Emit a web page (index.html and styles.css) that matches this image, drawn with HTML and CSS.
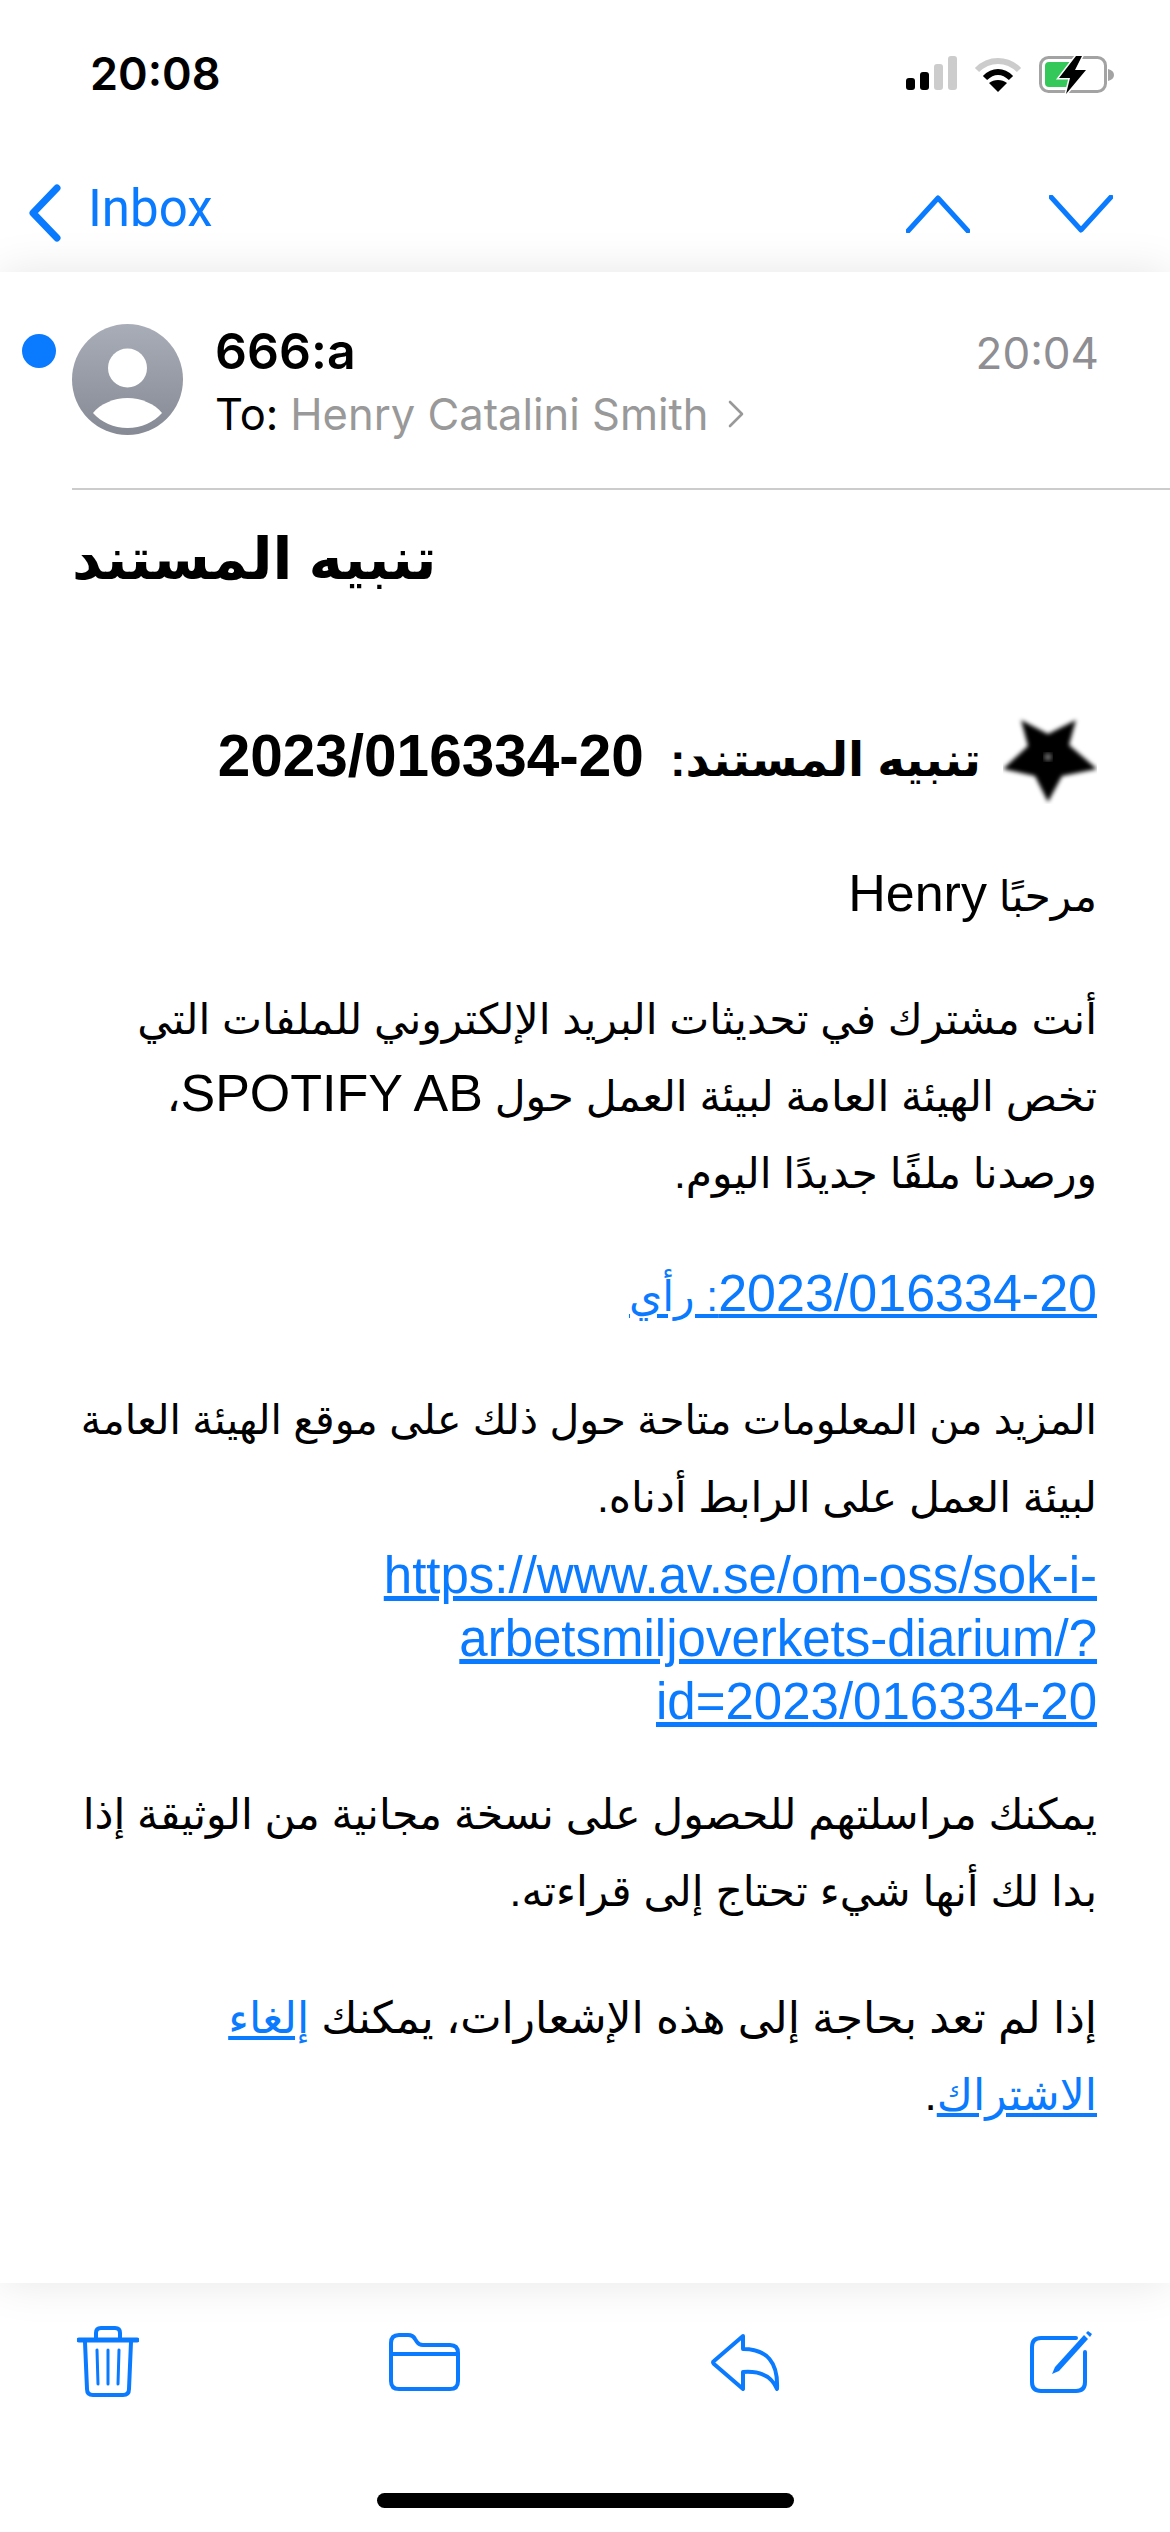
FILE: index.html
```html
<!DOCTYPE html>
<html lang="en">

<head>
  <meta charset="UTF-8">
  <title>Mail</title>
  <link rel="stylesheet" href="styles.css">
</head>

<body>
  <div class="phone">
    <header class="status-bar">
      <span class="clock">20:08</span>
      <div class="status-icons">
        <svg class="signal" width="51" height="34" viewBox="0 0 51 34">
          <rect x="0" y="22" width="9" height="12" rx="3" fill="#000" />
          <rect x="14" y="16" width="9" height="18" rx="3" fill="#000" />
          <rect x="28" y="8" width="9" height="26" rx="3" fill="#ccc" />
          <rect x="42" y="0" width="9" height="34" rx="3" fill="#ccc" />
        </svg>
        <svg class="wifi" width="48" height="36" viewBox="0 0 48 36">
          <path d="M3 14 C15 2 33 2 45 14" fill="none" stroke="#ccc" stroke-width="6" />
          <path d="M11 22 C19 14 29 14 37 22" fill="none" stroke="#000" stroke-width="6" />
          <path d="M24 36 L15 27 C20 23 28 23 33 27 Z" fill="#000" />
        </svg>
        <svg class="battery" width="76" height="38" viewBox="0 0 76 38">
          <rect x="1.5" y="1.5" width="65" height="34" rx="8" fill="none" stroke="#a3a3a3" stroke-width="3" />
          <rect x="6" y="6" width="30" height="25" rx="4" fill="#34c759" />
          <path d="M69 13 C73 14 75 16 75 19 C75 22 73 24 69 25 Z" fill="#a3a3a3" />
          <path d="M37 0 L20 22 L31 22 L27 38 L47 14 L36 14 L43 0 Z" fill="#000" stroke="#fff" stroke-width="3" paint-order="stroke" />
        </svg>
      </div>
    </header>

    <nav class="nav-bar">
      <a class="back">
        <svg width="33" height="58" viewBox="0 0 33 58">
          <path d="M29 4 L5 29 L29 54" fill="none" stroke="#0a7aff" stroke-width="7" stroke-linecap="round" stroke-linejoin="round" />
        </svg>
        <span>Inbox</span>
      </a>
      <div class="nav-arrows">
        <svg width="64" height="38" viewBox="0 0 64 38">
          <path d="M2 36 L32 3 L62 36" fill="none" stroke="#0a7aff" stroke-width="5" stroke-linecap="round" stroke-linejoin="round" />
        </svg>
        <svg width="64" height="38" viewBox="0 0 64 38">
          <path d="M2 2 L32 35 L62 2" fill="none" stroke="#0a7aff" stroke-width="5" stroke-linecap="round" stroke-linejoin="round" />
        </svg>
      </div>
    </nav>

    <main class="sheet">
      <section class="msg-head">
        <span class="unread-dot"></span>
        <svg class="avatar" width="111" height="111" viewBox="0 0 111 111">
          <defs>
            <linearGradient id="avatarFill" x1="0" y1="0" x2="0" y2="1">
              <stop offset="0" stop-color="#a9adb8" />
              <stop offset="1" stop-color="#868a95" />
            </linearGradient>
          </defs>
          <circle cx="55.5" cy="55.5" r="55.5" fill="url(#avatarFill)" />
          <circle cx="55.5" cy="44" r="19.5" fill="#fff" />
          <path d="M21 89 C28 80 42 74 55.5 74 C69 74 83 80 90 89 C82 98 69 104 55.5 104 C42 104 29 98 21 89 Z" fill="#fff" />
        </svg>
        <div class="msg-meta">
          <div class="sender-row">
            <span class="sender">666:a</span>
            <span class="msg-time">20:04</span>
          </div>
          <div class="recipient">
            To: <span class="recipient-name">Henry Catalini Smith</span>
            <svg width="18" height="30" viewBox="0 0 18 30">
              <path d="M3 3 L15 15 L3 27" fill="none" stroke="#999" stroke-width="2.6" stroke-linecap="round" stroke-linejoin="round" />
            </svg>
          </div>
        </div>
      </section>

      <h1 class="subject" dir="rtl">تنبيه المستند</h1>

      <article class="msg-body" dir="rtl">
        <h2 class="doc-title">
          <svg class="star" width="94" height="88" viewBox="0 0 94 88">
            <defs>
              <filter id="soft">
                <feGaussianBlur stdDeviation="2.2" />
              </filter>
            </defs>
            <path d="M18 4 L45 18 L73 4 L66 29 L94 53 L59 60 L45 86 L32 60 L0 53 L25 30 Z" fill="#000" filter="url(#soft)" />
            <circle cx="45" cy="41" r="4" fill="#666" filter="url(#soft)" />
          </svg>
          <span>تنبيه المستند:&nbsp; <bdi class="doc-number" dir="ltr">2023/016334-20</bdi></span>
        </h2>
        <p class="greeting">مرحبًا <span class="latin">Henry</span></p>
        <p class="intro">أنت مشترك في تحديثات البريد الإلكتروني للملفات التي<br>تخص الهيئة العامة لبيئة العمل حول <span class="latin">SPOTIFY AB</span>،<br>ورصدنا ملفًا جديدًا اليوم.</p>
        <p><a href="#"><span class="latin">2023/016334-20</span>: رأي</a></p>
        <p class="more-info"><span class="tight">المزيد من المعلومات متاحة حول ذلك على موقع الهيئة العامة</span><br>لبيئة العمل على الرابط أدناه.
          <a class="long-url" href="#" dir="ltr">https://www.av.se/om-oss/sok-i-<br>arbetsmiljoverkets-diarium/?<br>id=2023/016334-20</a>
        </p>
        <p class="copy-note">يمكنك مراسلتهم للحصول على نسخة مجانية من الوثيقة إذا<br>بدا لك أنها شيء تحتاج إلى قراءته.</p>
        <p class="wide">إذا لم تعد بحاجة إلى هذه الإشعارات، يمكنك <a href="#">إلغاء<br>الاشتراك</a>.</p>
      </article>
    </main>

    <footer class="toolbar">
      <div class="tool-row">
        <svg width="62" height="71" viewBox="0 0 62 71">
          <g fill="none" stroke="#0a7aff" stroke-linecap="round" stroke-linejoin="round">
            <path d="M2 14 H60" stroke-width="5" />
            <path d="M19 13 V7 Q19 2 24 2 H38 Q43 2 43 7 V13" stroke-width="4" />
            <path d="M8 16 L10 63 Q10 69 16 69 H46 Q52 69 52 63 L54 16" stroke-width="4" />
            <path d="M20 24 L21 58 M31 24 V58 M42 24 L41 58" stroke-width="3" />
          </g>
        </svg>
        <svg width="71" height="58" viewBox="0 0 71 58">
          <g fill="none" stroke="#0a7aff" stroke-width="4" stroke-linejoin="round">
            <path d="M2 10 Q2 2 10 2 H19 Q24 2 26 6 L28 9 Q30 12 34 12 H61 Q69 12 69 20 V48 Q69 56 61 56 H10 Q2 56 2 48 Z" />
            <path d="M2 21 H69" />
          </g>
        </svg>
        <svg width="69" height="58" viewBox="0 0 69 58">
          <path d="M32 3 L3 28 Q1 29 3 31 L32 56 V39 Q58 37 66 56 Q68 16 32 16 Z" fill="none" stroke="#0a7aff" stroke-width="4" stroke-linejoin="round" />
        </svg>
        <svg width="63" height="63" viewBox="0 0 63 63">
          <g fill="none" stroke="#0a7aff" stroke-linejoin="round" stroke-linecap="round">
            <path d="M46 8 H11 Q2 8 2 17 V52 Q2 61 11 61 H46 Q55 61 55 52 V22" stroke-width="4" />
          </g>
          <path d="M54 5 L25 37 L22 44 L29 41 L58 9 Z" fill="#0a7aff" />
          <path d="M58 1 L62 4 L60 7 L56 3 Z" fill="#0a7aff" />
        </svg>
      </div>
      <span class="home-bar"></span>
    </footer>
  </div>
</body>

</html>
```

FILE: styles.css
```css
/* Global Styles */
body {
  margin: 0;
  background: #fff;
  color: #000;
  font-family: 'Liberation Sans', 'DejaVu Sans', sans-serif;
}

.phone {
  width: 1170px;
  height: 2532px;
  display: flex;
  flex-direction: column;
  overflow: hidden;
}

/* Status bar */
.status-bar {
  height: 110px;
  box-sizing: border-box;
  padding: 51px 55px 0 90px;
  display: flex;
  justify-content: space-between;
  align-items: flex-start;
}

.clock {
  font-family: 'Inter', sans-serif;
  font-size: 45px;
  font-weight: 600;
  line-height: 46px;
}

.status-icons {
  display: flex;
  align-items: flex-start;
  gap: 17px;
  padding-top: 5px;
}

/* Nav bar */
.nav-bar {
  height: 162px;
  box-sizing: border-box;
  padding: 73px 57px 0 28px;
  display: flex;
  justify-content: space-between;
  align-items: flex-start;
}

.back {
  display: flex;
  align-items: center;
  gap: 27px;
  color: #0a7aff;
  font-family: 'Roboto', sans-serif;
  font-size: 51px;
}

.back span {
  position: relative;
  top: -4px;
}

.nav-arrows {
  display: flex;
  gap: 79px;
  padding-top: 12px;
}

/* Message sheet */
.sheet {
  flex: 1;
  background: #fff;
  position: relative;
  box-shadow: 0 0 42px rgba(0, 0, 0, 0.1);
}

.msg-head {
  display: flex;
  align-items: flex-start;
  margin-right: 71px;
  padding: 50px 0 0 22px;
  height: 166px;
}

.unread-dot {
  width: 34px;
  height: 34px;
  margin-top: 12px;
  border-radius: 50%;
  background: #0a7aff;
  flex: none;
}

.avatar {
  margin-top: 2px;
  margin-left: 16px;
  flex: none;
}

.msg-meta {
  flex: 1;
  margin-left: 32px;
  font-family: 'Inter', sans-serif;
}

.sender-row {
  display: flex;
  justify-content: space-between;
  align-items: baseline;
  line-height: 58px;
}

.sender {
  font-size: 50px;
  font-weight: 600;
}

.msg-time {
  font-size: 44px;
  color: #8e8e93;
}

.recipient {
  display: flex;
  align-items: center;
  gap: 12px;
  margin-top: 3px;
  font-size: 43.5px;
  line-height: 58px;
}

.recipient-name {
  color: #999;
}

.recipient svg {
  margin-left: 6px;
}

.subject {
  margin: 0 0 0 72px;
  padding-top: 31px;
  border-top: 2px solid #ccc;
  text-align: left;
  width: 1098px;
  box-sizing: border-box;
  font-size: 58px;
  line-height: 76px;
  font-weight: 700;
}

/* Email body */
.msg-body {
  padding: 119px 73px 0 85px;
  font-size: 42.5px;
  line-height: 77px;
}

.doc-title {
  display: flex;
  align-items: center;
  gap: 22px;
  margin: 0;
  font-size: 47px;
  line-height: 88px;
  font-weight: 700;
}

.doc-number {
  font-size: 58.5px;
  line-height: 1;
}

.star {
  flex: none;
}

.latin {
  font-size: 52px;
  line-height: 1;
}

.msg-body p {
  margin: 46px 0 0;
  white-space: nowrap;
}

.msg-body p.greeting {
  margin-top: 54px;
}

.tight {
  font-size: 41px;
}

.msg-body p.copy-note {
  margin-top: 43px;
}

.msg-body p.wide {
  margin-top: 49px;
  font-size: 44px;
}

.msg-body a {
  color: #0a7aff;
  text-decoration: underline;
}

.long-url {
  display: block;
  margin-top: 8px;
  font-size: 51px;
  line-height: 63px;
  text-align: right;
}

/* Bottom toolbar */
.toolbar {
  height: 249px;
  position: relative;
}

.tool-row {
  display: flex;
  justify-content: space-between;
  align-items: center;
  padding: 43px 77px 0 77px;
}

.home-bar {
  position: absolute;
  left: 377px;
  bottom: 24px;
  width: 417px;
  height: 15px;
  border-radius: 8px;
  background: #000;
}
```
